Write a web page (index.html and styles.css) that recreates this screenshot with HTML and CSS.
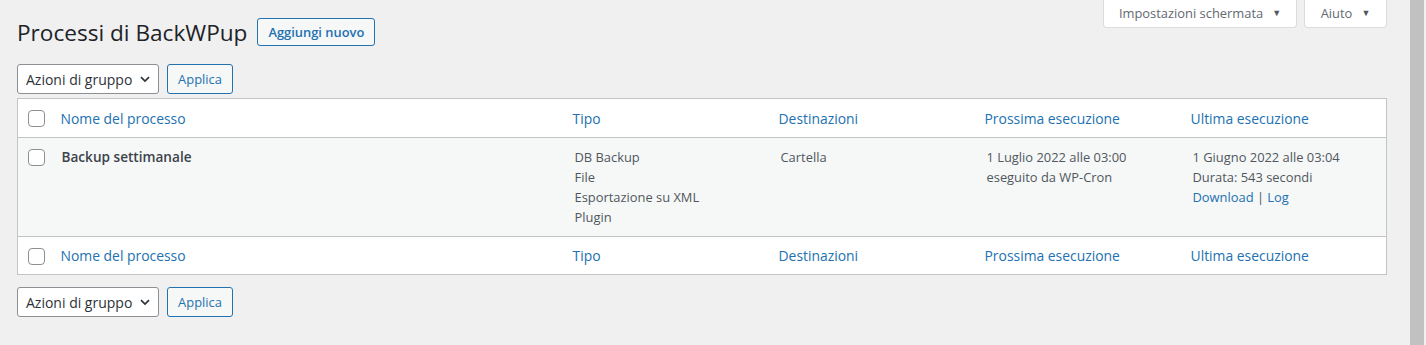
FILE: index.html
```html
<!DOCTYPE html>
<html lang="it">
<head>
<meta charset="utf-8">
<title>Processi di BackWPup</title>
<link rel="stylesheet" href="styles.css">
</head>
<body>
<div class="page">
  <main class="wrap">
    <div class="screen-meta">
      <button class="meta-tab">Impostazioni schermata <span class="tri">▼</span></button>
      <button class="meta-tab">Aiuto <span class="tri">▼</span></button>
    </div>
    <div class="heading">
      <h1>Processi di BackWPup</h1>
      <a class="add-new" href="#">Aggiungi nuovo</a>
    </div>
    <div class="tablenav">
      <div class="select">Azioni di gruppo
        <svg class="chev" width="12" height="12" viewBox="0 0 12 12"><path d="M2 4.2 L6 8 L10 4.2" fill="none" stroke="#2c3338" stroke-width="1.7"/></svg>
      </div>
      <button class="btn">Applica</button>
    </div>
    <table class="list">
      <colgroup>
        <col class="c-cb"><col class="c-name"><col class="c-w"><col class="c-w"><col class="c-w"><col>
      </colgroup>
      <thead>
        <tr>
          <th class="cb"><span class="check"></span></th>
          <th><a href="#">Nome del processo</a></th>
          <th><a href="#">Tipo</a></th>
          <th><a href="#">Destinazioni</a></th>
          <th><a href="#">Prossima esecuzione</a></th>
          <th><a href="#">Ultima esecuzione</a></th>
        </tr>
      </thead>
      <tbody>
        <tr>
          <td class="cb"><span class="check"></span></td>
          <td><strong class="row-title">Backup settimanale</strong></td>
          <td>DB Backup<br>File<br>Esportazione su XML<br>Plugin</td>
          <td>Cartella</td>
          <td>1 Luglio 2022 alle 03:00<br>eseguito da WP-Cron</td>
          <td>1 Giugno 2022 alle 03:04<br>Durata: 543 secondi<br><a href="#">Download</a> | <a href="#">Log</a></td>
        </tr>
      </tbody>
      <tfoot>
        <tr>
          <th class="cb"><span class="check"></span></th>
          <th><a href="#">Nome del processo</a></th>
          <th><a href="#">Tipo</a></th>
          <th><a href="#">Destinazioni</a></th>
          <th><a href="#">Prossima esecuzione</a></th>
          <th><a href="#">Ultima esecuzione</a></th>
        </tr>
      </tfoot>
    </table>
    <div class="tablenav bottom">
      <div class="select">Azioni di gruppo
        <svg class="chev" width="12" height="12" viewBox="0 0 12 12"><path d="M2 4.2 L6 8 L10 4.2" fill="none" stroke="#2c3338" stroke-width="1.7"/></svg>
      </div>
      <button class="btn">Applica</button>
    </div>
  </main>
  <div class="scrollbar"><div class="thumb"></div></div>
</div>
</body>
</html>
```
FILE: styles.css
```css
* { box-sizing: border-box; }
html, body { margin: 0; padding: 0; height: 100%; }
body {
  background: #f0f0f1;
  font-family: "Open Sans", "Noto Sans", sans-serif;
  color: #50575e;
  font-size: 12.9px;
  overflow: hidden;
}
.page { display: flex; height: 345px; }
.wrap { flex: 1; padding: 0 23px 0 17px; }
.scrollbar { width: 16px; padding-right: 2px; }
.thumb { width: 14px; height: 100%; background: #c1c1c1; }

.screen-meta {
  display: flex; justify-content: flex-end; gap: 7px;
}
.meta-tab {
  font: inherit; font-size: 12.9px; color: #646970;
  background: #fff; border: 1px solid #dcdcde; border-top: none;
  border-radius: 0 0 4px 4px;
  height: 28px; padding: 0 0 2px;
  display: flex; align-items: center; gap: 9px;
}
.meta-tab:first-child { width: 194px; justify-content: center; }
.meta-tab:last-child { width: 83px; justify-content: center; }
.tri { font-size: 9px; color: #50575e; }

.heading {
  display: flex; align-items: center; gap: 10px;
  margin-top: -20px; height: 48px;
}
h1 {
  margin: 0; font-size: 22.6px; font-weight: 400; color: #1d2327;
  line-height: 1.3; position: relative; top: 1px;
}
.add-new {
  display: inline-flex; align-items: center; height: 28px; padding: 0 10px;
  border: 1px solid #2271b1; border-radius: 3px; color: #2271b1;
  background: #f6f7f7; text-decoration: none; font-size: 12.9px; font-weight: 600;
}

.tablenav { display: flex; gap: 8px; margin-top: 8px; height: 30px; margin-bottom: 4px; }
.tablenav.bottom { margin-top: 12px; }
.select {
  width: 142px; height: 30px; background: #fff; border: 1px solid #8c8f94;
  border-radius: 3px; display: flex; align-items: center; justify-content: space-between;
  padding: 0 7px 0 8px; color: #2c3338; font-size: 14px;
}
.chev { display: block; }
.btn {
  font: inherit; font-size: 12.9px; color: #2271b1; background: #f6f7f7;
  border: 1px solid #2271b1; border-radius: 3px; width: 66px; height: 30px; padding: 0;
}

table.list {
  width: 100%; table-layout: fixed; border-collapse: collapse;
  background: #fff; border: 1px solid #c3c4c7;
}
col.c-cb { width: 35px; }
col.c-name { width: 512px; }
col.c-w { width: 206px; }
th, td { text-align: left; vertical-align: top; }
thead th, tfoot th {
  font-weight: 400; height: 39px; padding: 0 8px; vertical-align: middle;
  font-size: 13.9px;
}
tfoot th { height: 38px; }
thead tr { border-bottom: 1px solid #c3c4c7; }
tfoot tr { border-top: 1px solid #c3c4c7; }
th a, td a { color: #2271b1; text-decoration: none; }
tbody tr { background: #f6f7f7; }
tbody td { padding: 9px 10px 9px 10px; line-height: 20px; height: 99px; }
tbody td:nth-child(2) { padding-left: 9px; }
.row-title { font-size: 13.6px; font-weight: 600; color: #3c434a; }
th.cb, td.cb { padding: 0 0 0 10px; }
td.cb { padding-top: 11px; }
.check {
  display: block; width: 17px; height: 17px; border: 1px solid #8c8f94;
  border-radius: 4px; background: #fff;
}
thead th.cb .check, tfoot th.cb .check { margin-top: 1px; }
```
